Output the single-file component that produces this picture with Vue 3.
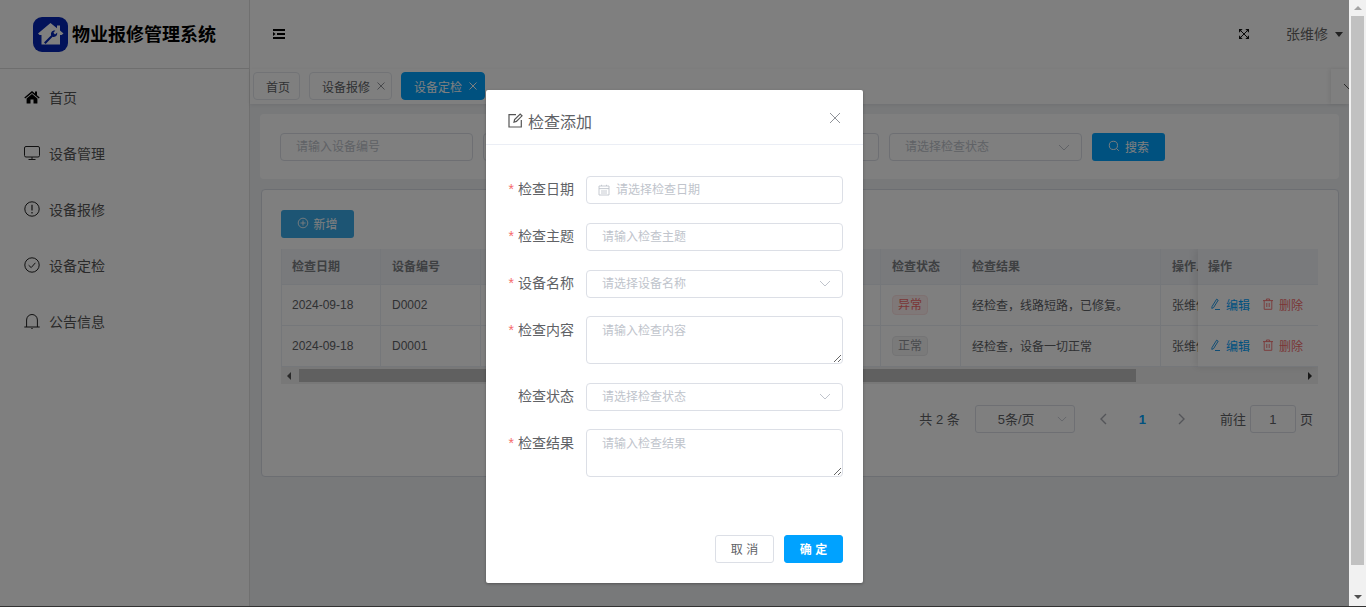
<script setup>
const menus = [
  { name: '首页', icon: 'home' },
  { name: '设备管理', icon: 'monitor' },
  { name: '设备报修', icon: 'warn' },
  { name: '设备定检', icon: 'check' },
  { name: '公告信息', icon: 'bell' }
]
const rows = [
  { date: '2024-09-18', code: 'D0002', status: '异常', danger: true, result: '经检查，线路短路，已修复。', user: '张维修' },
  { date: '2024-09-18', code: 'D0001', status: '正常', danger: false, result: '经检查，设备一切正常', user: '张维修' }
]
const fields = [
  { label: '检查日期', ph: '请选择检查日期', type: 'date', req: true },
  { label: '检查主题', ph: '请输入检查主题', type: 'input', req: true },
  { label: '设备名称', ph: '请选择设备名称', type: 'select', req: true },
  { label: '检查内容', ph: '请输入检查内容', type: 'area', req: true },
  { label: '检查状态', ph: '请选择检查状态', type: 'select', req: false },
  { label: '检查结果', ph: '请输入检查结果', type: 'area', req: true }
]
</script>

<template>
  <div class="app">
    <div class="page">
      <aside class="side">
        <div class="brand">
          <svg class="logo" viewBox="0 0 35 35">
            <rect width="35" height="35" rx="9" fill="#0525b4" />
            <path d="M17.5 6 L24 11.2 V8.5 H27 V13.6 L30.5 16.5 L28.6 18 H27 V27.5 H8.5 V18 H6.6 L5 16.5 Z" fill="#fff" />
            <path d="M11 25.5 L18.2 18.2 C17.2 15.6 19.4 13 22.4 13.6 L20.4 15.8 L22 17.6 L24.2 15.6 C24.7 18.6 22.2 20.8 19.6 19.8 L12.6 27 Z" fill="#0525b4" />
          </svg>
          <span class="brand-name">物业报修管理系统</span>
        </div>
        <nav class="menu">
          <div v-for="m in menus" :key="m.name" class="menu-item">
            <svg class="menu-icon" viewBox="0 0 16 16">
              <path v-if="m.icon === 'home'" d="M8 2 L0.3 8.4 L1.2 9.5 L8 3.9 L14.8 9.5 L15.7 8.4 L13 6.2 V2.6 H11 V4.5 Z M8 5 L2.6 9.5 V14.5 H6.5 V10.5 H9.5 V14.5 H13.4 V9.5 Z" fill="#000" />
              <g v-else-if="m.icon === 'monitor'" fill="none" stroke="#222" stroke-width="1">
                <rect x="0.5" y="1.5" width="15" height="10.5" rx="1.5" />
                <path d="M8 12 V14.5 M4.5 14.5 H11.5" />
              </g>
              <g v-else-if="m.icon === 'warn'" fill="none" stroke="#222" stroke-width="1">
                <circle cx="8" cy="8" r="7.2" />
                <path d="M8 3.8 V9.4 M8 11 V12.4" stroke-width="1.2" />
              </g>
              <g v-else-if="m.icon === 'check'" fill="none" stroke="#222" stroke-width="1">
                <circle cx="8" cy="8" r="7.2" />
                <path d="M4.6 8.2 L7.2 10.6 L11.4 5.8" />
              </g>
              <g v-else fill="none" stroke="#222" stroke-width="1">
                <path d="M0.3 14 H15.7 M2.6 14 V7 C2.6 3.8 5 1.5 8 1.5 C11 1.5 13.4 3.8 13.4 7 V14" />
                <path d="M7.3 15.6 H8.7" />
              </g>
            </svg>
            <span>{{ m.name }}</span>
          </div>
        </nav>
      </aside>

      <div class="content">
        <header class="head">
          <svg class="fold" viewBox="0 0 12 10">
            <path d="M0 1 H12 M4 5 H12 M0 9 H12" stroke="#000" stroke-width="2" />
            <path d="M0 3 L2.6 5 L0 7 Z" fill="#000" />
          </svg>
          <div class="head-right">
            <svg class="expand" viewBox="0 0 12 12">
              <path d="M1.5 1.5 L10.5 10.5 M10.5 1.5 L1.5 10.5" stroke="#111" stroke-width="1.2" />
              <path d="M0 0 H4.4 L0 4.4 Z M12 0 V4.4 L7.6 0 Z M0 12 V7.6 L4.4 12 Z M12 12 H7.6 L12 7.6 Z" fill="#111" />
            </svg>
            <span class="user">张维修</span>
            <i class="caret"></i>
          </div>
        </header>

        <div class="tabs">
          <div class="tab">首页</div>
          <div class="tab closable">设备报修
            <svg viewBox="0 0 8 8" class="x"><path d="M0.5 0.5 L7.5 7.5 M7.5 0.5 L0.5 7.5" stroke="#909399" stroke-width="1" /></svg>
          </div>
          <div class="tab closable active">设备定检
            <svg viewBox="0 0 8 8" class="x"><path d="M0.5 0.5 L7.5 7.5 M7.5 0.5 L0.5 7.5" stroke="#fff" stroke-width="1" /></svg>
          </div>
          <div class="tab-more">
            <svg viewBox="0 0 12 7" class="chev"><path d="M1 1 L6 6 L11 1" fill="none" stroke="#555" stroke-width="1" /></svg>
          </div>
        </div>

        <main class="main">
          <section class="search">
            <div class="box grow"><span class="ph">请输入设备编号</span></div>
            <div class="box grow"></div>
            <div class="box grow"></div>
            <div class="box grow between">
              <span class="ph">请选择检查状态</span>
              <svg viewBox="0 0 12 7" class="chev2"><path d="M1 1 L6 6 L11 1" fill="none" stroke="#c0c4cc" stroke-width="1" /></svg>
            </div>
            <button class="btn-blue search-btn">
              <svg viewBox="0 0 14 14" class="btn-icon"><circle cx="6.3" cy="6.3" r="4.8" fill="none" stroke="#fff" stroke-width="1.1" /><path d="M10 10 L12.6 12.6" stroke="#fff" stroke-width="1.1" /></svg>
              搜索
            </button>
          </section>

          <section class="card">
            <button class="btn-blue add-btn">
              <svg viewBox="0 0 14 14" class="btn-icon"><circle cx="7" cy="7" r="5.6" fill="none" stroke="#fff" stroke-width="1" /><path d="M7 4 V10 M4 7 H10" stroke="#fff" stroke-width="1" /></svg>
              新增
            </button>

            <div class="table">
              <div class="tr th">
                <div class="td c1">检查日期</div>
                <div class="td c2">设备编号</div>
                <div class="td c3"></div>
                <div class="td c3"></div>
                <div class="td c4">检查状态</div>
                <div class="td c5">检查结果</div>
                <div class="td c6">操作人</div>
              </div>
              <div v-for="r in rows" :key="r.code" class="tr">
                <div class="td c1">{{ r.date }}</div>
                <div class="td c2">{{ r.code }}</div>
                <div class="td c3"></div>
                <div class="td c3"></div>
                <div class="td c4"><span class="tag" :class="{ danger: r.danger }">{{ r.status }}</span></div>
                <div class="td c5 cjk">{{ r.result }}</div>
                <div class="td c6 cjk">{{ r.user }}</div>
              </div>
              <div class="hbar">
                <i class="arrow left"></i>
                <div class="hthumb"></div>
                <i class="arrow right"></i>
              </div>
              <div class="fixed">
                <div class="fx-head">操作</div>
                <div v-for="r in rows" :key="r.code" class="fx-row">
                  <span class="link blue">
                    <svg viewBox="0 0 12 12" class="link-icon"><path d="M3 8.6 L7.6 1.2 L9.2 2.2 L4.6 9.6 L2.8 10.4 Z M6 11.5 H11" fill="none" stroke="#0a8fe6" stroke-width="0.9" /></svg>
                    编辑
                  </span>
                  <span class="link red">
                    <svg viewBox="0 0 12 12" class="link-icon"><path d="M1 2.6 H11 M4.4 2.6 V1 H7.6 V2.6 M2.2 2.6 V11.3 H9.8 V2.6 M4.8 5 V9 M7.2 5 V9" fill="none" stroke="#f56c6c" stroke-width="0.9" /></svg>
                    删除
                  </span>
                </div>
              </div>
            </div>

            <div class="pager">
              <span class="total lift">共 2 条</span>
              <div class="size">
                <span class="lift">5条/页</span>
                <svg viewBox="0 0 12 7" class="chev3"><path d="M1 1 L6 6 L11 1" fill="none" stroke="#c0c4cc" stroke-width="1" /></svg>
              </div>
              <svg viewBox="0 0 7 12" class="pg-arrow"><path d="M6 1 L1 6 L6 11" fill="none" stroke="#a8abb2" stroke-width="1.4" /></svg>
              <span class="cur">1</span>
              <svg viewBox="0 0 7 12" class="pg-arrow"><path d="M1 1 L6 6 L1 11" fill="none" stroke="#a8abb2" stroke-width="1.4" /></svg>
              <span class="goto lift">前往</span>
              <div class="pg-input">1</div>
              <span class="lift">页</span>
            </div>
          </section>
        </main>
      </div>

      <div class="overlay">
        <div class="dialog">
          <div class="d-head">
            <svg viewBox="0 0 15 15" class="d-icon"><path d="M8 1.7 H1 V14 H13.3 V7 M6 9.2 L6.6 6.6 L12.2 1 L14 2.8 L8.4 8.4 Z" fill="none" stroke="#555" stroke-width="1.2" /></svg>
            <span class="d-title">检查添加</span>
            <svg viewBox="0 0 12 12" class="d-close"><path d="M1 1 L11 11 M11 1 L1 11" stroke="#909399" stroke-width="1" /></svg>
          </div>
          <form class="d-body">
            <div v-for="f in fields" :key="f.label" class="row">
              <label class="lab" :class="{ tall: f.type === 'area' }"><b v-if="f.req">*</b>{{ f.label }}</label>
              <div v-if="f.type === 'date'" class="ctl date">
                <svg viewBox="0 0 12 12" class="cal"><path d="M1 2 H11 V11 H1 Z M1 4.6 H11 M3.5 0.8 V2 M8.5 0.8 V2 M3 7 H9 M3 9 H9" fill="none" stroke="#c0c4cc" stroke-width="0.9" /></svg>
                <span class="ph">{{ f.ph }}</span>
              </div>
              <input v-else-if="f.type === 'input'" class="ctl inp" :placeholder="f.ph" />
              <div v-else-if="f.type === 'select'" class="ctl sel">
                <span class="ph">{{ f.ph }}</span>
                <svg viewBox="0 0 12 7" class="chev2"><path d="M1 1 L6 6 L11 1" fill="none" stroke="#c0c4cc" stroke-width="1" /></svg>
              </div>
              <textarea v-else class="ctl area" :placeholder="f.ph"></textarea>
            </div>
          </form>
          <div class="d-foot">
            <button class="btn-cancel">取 消</button>
            <button class="btn-ok">确 定</button>
          </div>
        </div>
      </div>
    </div>

    <div class="scrollbar">
      <i class="sb-up"></i>
      <div class="sb-thumb"></div>
      <i class="sb-down"></i>
    </div>
  </div>
</template>

<style>
html, body { margin: 0; height: 100%; overflow: hidden; }
</style>

<style scoped>
.app {
  display: flex;
  height: 607px;
  width: 1366px;
  overflow: hidden;
  font-family: "Liberation Sans", "Noto Sans CJK SC", sans-serif;
  font-size: 14px;
  color: #606266;
  background: #fff;
}
.page {
  position: relative;
  width: 1349px;
  height: 607px;
  display: flex;
  overflow: hidden;
  flex: none;
}
.side {
  width: 249px;
  flex: none;
  background: #fff;
  border-right: 1px solid #e0e0e0;
}
.brand {
  height: 68px;
  border-bottom: 1px solid #ddd;
  display: flex;
  align-items: center;
  padding-left: 33px;
  gap: 4px;
}
.logo { width: 35px; height: 35px; flex: none; }
.brand-name { font-size: 18px; font-weight: 700; color: #000; margin-bottom: 2px; }
.menu-item {
  height: 56px;
  display: flex;
  align-items: center;
  padding-left: 24px;
  gap: 9px;
  color: #555;
}
.menu-icon { width: 16px; height: 16px; flex: none; }
.content {
  flex: 1;
  min-width: 0;
  display: flex;
  flex-direction: column;
  background: #f0f2f5;
}
.head {
  height: 68px;
  flex: none;
  background: #fff;
  border-bottom: 1px solid #ddd;
  display: flex;
  align-items: center;
  justify-content: space-between;
  padding: 0 0 2px 23px;
  box-sizing: content-box;
  margin-bottom: -2px;
}
.fold { width: 12px; height: 10px; }
.head-right { display: flex; align-items: center; padding-right: 6px; }
.expand { width: 10px; height: 10px; margin-right: 37px; }
.user { color: #666; padding-bottom: 2px; }
.caret {
  margin-left: 7px;
  border-left: 4px solid transparent;
  border-right: 4px solid transparent;
  border-top: 5px solid #444;
}
.tabs {
  height: 35px;
  box-sizing: border-box;
  flex: none;
  background: #fff;
  box-shadow: 0 1px 4px rgba(0, 0, 0, .08);
  display: flex;
  align-items: flex-start;
  padding: 3px 0 0 3px;
  gap: 9px;
  position: relative;
}
.tab {
  height: 28px;
  box-sizing: border-box;
  border: 1px solid #e4e7ed;
  border-radius: 4px;
  padding: 0 9px 0 12px;
  display: flex;
  align-items: center;
  font-size: 12px;
  color: #606266;
}
.tab.closable { padding-right: 6px; }
.tab.closable.active { background: #00a2ff; border-color: #00a2ff; color: #fff; padding-right: 7px; }
.x { width: 8px; height: 8px; margin-left: 7px; flex: none; }
.tab-more {
  margin-left: auto;
  width: 18px;
  height: 35px;
  margin-top: -3px;
  background: #fff;
  box-shadow: -2px 0 4px rgba(0, 0, 0, .08);
  display: flex;
  align-items: center;
  overflow: hidden;
}
.chev { width: 12px; height: 7px; margin-left: 12px; flex: none; }
.main { flex: 1; padding: 10px 10px 0 10px; min-height: 0; }
.search {
  height: 65px;
  box-sizing: border-box;
  background: #fff;
  border-radius: 4px;
  padding: 19px 20px 0;
  display: flex;
  align-items: flex-start;
  gap: 10px;
}
.box {
  height: 28px;
  box-sizing: border-box;
  border: 1px solid #dcdfe6;
  border-radius: 4px;
  background: #fff;
  padding: 0 15px;
  display: flex;
  align-items: center;
  font-size: 12px;
}
.grow { width: 193px; flex: none; }
.between { justify-content: space-between; padding-right: 11px; }
.ph { color: #c0c4cc; font-size: 12px; padding-bottom: 3px; }
.date .ph { padding-bottom: 4px; }
.sel .ph { padding-bottom: 2px; }
.chev2 { width: 12px; height: 7px; }
.btn-blue {
  height: 28px;
  border: 0;
  border-radius: 3px;
  background: #3aabe8;
  color: #fff;
  font: inherit;
  font-size: 12px;
  padding: 0 0 2px;
  display: flex;
  align-items: center;
  justify-content: center;
  gap: 4px;
}
.search-btn { width: 73px; background: #00a2ff; gap: 5px; }
.btn-icon { width: 12px; height: 12px; }
.card {
  margin: 10px 0 0 1px;
  height: 288px;
  box-sizing: border-box;
  background: #fff;
  border: 1px solid #d8dce5;
  border-radius: 4px;
  padding: 20px 20px 0 19px;
}
.add-btn { width: 73px; margin-bottom: 11px; }
.table {
  position: relative;
  width: 1037px;
  height: 135px;
  overflow: hidden;
  font-size: 12px;
  background: #fff;
}
.tr {
  display: flex;
  height: 41px;
  box-sizing: border-box;
  border-bottom: 1px solid #ebeef5;
}
.tr.th { height: 36px; background: #f2f4f8; font-weight: 700; color: #7d8085; }
.tr.th .td { padding-bottom: 2px; }
.td {
  flex: none;
  box-sizing: border-box;
  border-right: 1px solid #ebeef5;
  padding-left: 11px;
  display: flex;
  align-items: center;
  white-space: nowrap;
  overflow: hidden;
}
.td.cjk { padding-bottom: 2px; }
.c1 { width: 100px; border-left: 1px solid #ebeef5; padding-left: 10px; }
.c2 { width: 100px; }
.c3 { width: 200px; }
.c4 { width: 80px; }
.c5 { width: 200px; }
.c6 { width: 100px; }
.tag {
  height: 20px;
  box-sizing: border-box;
  padding: 0 5px;
  border: 1px solid #e9e9eb;
  border-radius: 4px;
  background: #f4f4f5;
  color: #909399;
  line-height: 18px;
}
.tag.danger { background: #fef0f0; border-color: #fde2e2; color: #f56c6c; }
.hbar {
  height: 17px;
  background: #f1f1f1;
  display: flex;
  align-items: center;
  position: relative;
}
.hthumb { position: absolute; left: 18px; width: 837px; top: 2px; height: 13px; background: #c1c1c1; }
.arrow { position: absolute; top: 5px; border-top: 4px solid transparent; border-bottom: 4px solid transparent; }
.arrow.left { left: 6px; border-right: 4px solid #555; }
.arrow.right { right: 6px; border-left: 4px solid #333; }
.fixed {
  position: absolute;
  right: 0;
  top: 0;
  width: 120px;
  background: #fff;
  box-shadow: -2px 0 8px rgba(0, 0, 0, .1);
}
.fx-head {
  height: 36px;
  box-sizing: border-box;
  background: #f2f4f8;
  border-bottom: 1px solid #ebeef5;
  padding: 0 0 2px 10px;
  display: flex;
  align-items: center;
  font-weight: 700;
  color: #7d8085;
}
.fx-row {
  height: 41px;
  box-sizing: border-box;
  border-bottom: 1px solid #ebeef5;
  padding: 0 0 2px 11px;
  display: flex;
  align-items: center;
  gap: 12px;
}
.link { display: flex; align-items: center; gap: 5px; }
.link.blue { color: #00a2ff; }
.link.red { color: #f56c6c; }
.link-icon { width: 12px; height: 12px; flex: none; }
.pager {
  margin-top: 21px;
  display: flex;
  align-items: center;
  justify-content: flex-end;
  height: 28px;
  padding-right: 5px;
  font-size: 13px;
}
.lift { padding-bottom: 2px; }
.total { margin-right: 15px; }
.size {
  width: 100px;
  height: 28px;
  box-sizing: border-box;
  border: 1px solid #dcdfe6;
  border-radius: 3px;
  padding: 0 7px 0 22px;
  display: flex;
  align-items: center;
  justify-content: space-between;
  margin-right: 25px;
}
.chev3 { width: 10px; height: 6px; }
.pg-arrow { width: 7px; height: 12px; }
.cur { color: #00a2ff; font-weight: 700; margin: 0 32px; }
.goto { margin-left: 35px; margin-right: 4px; }
.pg-input {
  width: 46px;
  height: 28px;
  box-sizing: border-box;
  border: 1px solid #dcdfe6;
  border-radius: 3px;
  display: flex;
  align-items: center;
  justify-content: center;
  margin-right: 4px;
}
.overlay {
  position: absolute;
  inset: 0;
  background: rgba(0, 0, 0, .5);
  border-bottom: 1px solid #333;
  box-sizing: border-box;
  display: flex;
  justify-content: center;
  align-items: flex-start;
  padding-top: 90px;
}
.dialog {
  width: 377px;
  background: #fff;
  border-radius: 2px;
  box-shadow: 0 1px 3px rgba(0, 0, 0, .3);
}
.d-head {
  height: 55px;
  box-sizing: border-box;
  border-bottom: 1px solid #ebeef5;
  display: flex;
  align-items: center;
  padding: 7px 0 0 22px;
  position: relative;
}
.d-icon { width: 15px; height: 15px; flex: none; }
.d-title { font-size: 16px; color: #606266; margin-left: 5px; }
.d-close { position: absolute; right: 22px; top: 22px; width: 12px; height: 12px; }
.d-body {
  padding: 31.25px 20px 0 22px;
  display: flex;
  flex-direction: column;
  gap: 18.65px;
}
.row { display: flex; align-items: flex-start; }
.lab {
  width: 66px;
  height: 28px;
  line-height: 26px;
  margin-right: 12px;
  flex: none;
  color: #606266;
  white-space: nowrap;
  display: flex;
  justify-content: flex-end;
}
.lab.tall { line-height: 28px; }
.lab b { color: #f56c6c; font-weight: 400; margin-right: 4px; }
.ctl {
  width: 257px;
  box-sizing: border-box;
  border: 1px solid #dcdfe6;
  border-radius: 4px;
  background: #fff;
  font: inherit;
  font-size: 12px;
  color: #606266;
  outline: none;
  display: block;
}
.date, .sel { height: 28px; display: flex; align-items: center; }
.date { padding-left: 11px; gap: 6px; }
.cal { width: 12px; height: 12px; flex: none; }
.sel { padding: 0 11px 0 15px; justify-content: space-between; }
.inp { height: 28px; padding: 0 15px; }
.area { height: 48px; padding: 5px 15px; resize: vertical; line-height: 18px; }
.inp::placeholder, .area::placeholder { color: #c0c4cc; opacity: 1; }
.d-foot {
  display: flex;
  justify-content: flex-end;
  gap: 10px;
  padding: 57.55px 20px 20px 0;
}
.btn-cancel, .btn-ok {
  width: 59px;
  height: 28px;
  box-sizing: border-box;
  border-radius: 3px;
  font: inherit;
  font-size: 12px;
  padding: 0 0 2px;
}
.btn-cancel { background: #fff; border: 1px solid #dcdfe6; color: #606266; }
.btn-ok { background: #00a2ff; border: 1px solid #00a2ff; color: #fff; font-weight: 700; }
.scrollbar {
  width: 17px;
  flex: none;
  background: #f1f1f1;
  position: relative;
  box-sizing: border-box;
  border-bottom: 1px solid #333;
}
.sb-up {
  position: absolute;
  top: 6px;
  left: 5px;
  border-left: 4px solid transparent;
  border-right: 4px solid transparent;
  border-bottom: 4px solid #a3a3a3;
}
.sb-thumb { position: absolute; top: 16px; left: 2px; right: 2px; height: 549px; background: #c1c1c1; }
.sb-down {
  position: absolute;
  bottom: 7px;
  left: 5px;
  border-left: 4px solid transparent;
  border-right: 4px solid transparent;
  border-top: 4px solid #505050;
}
</style>
